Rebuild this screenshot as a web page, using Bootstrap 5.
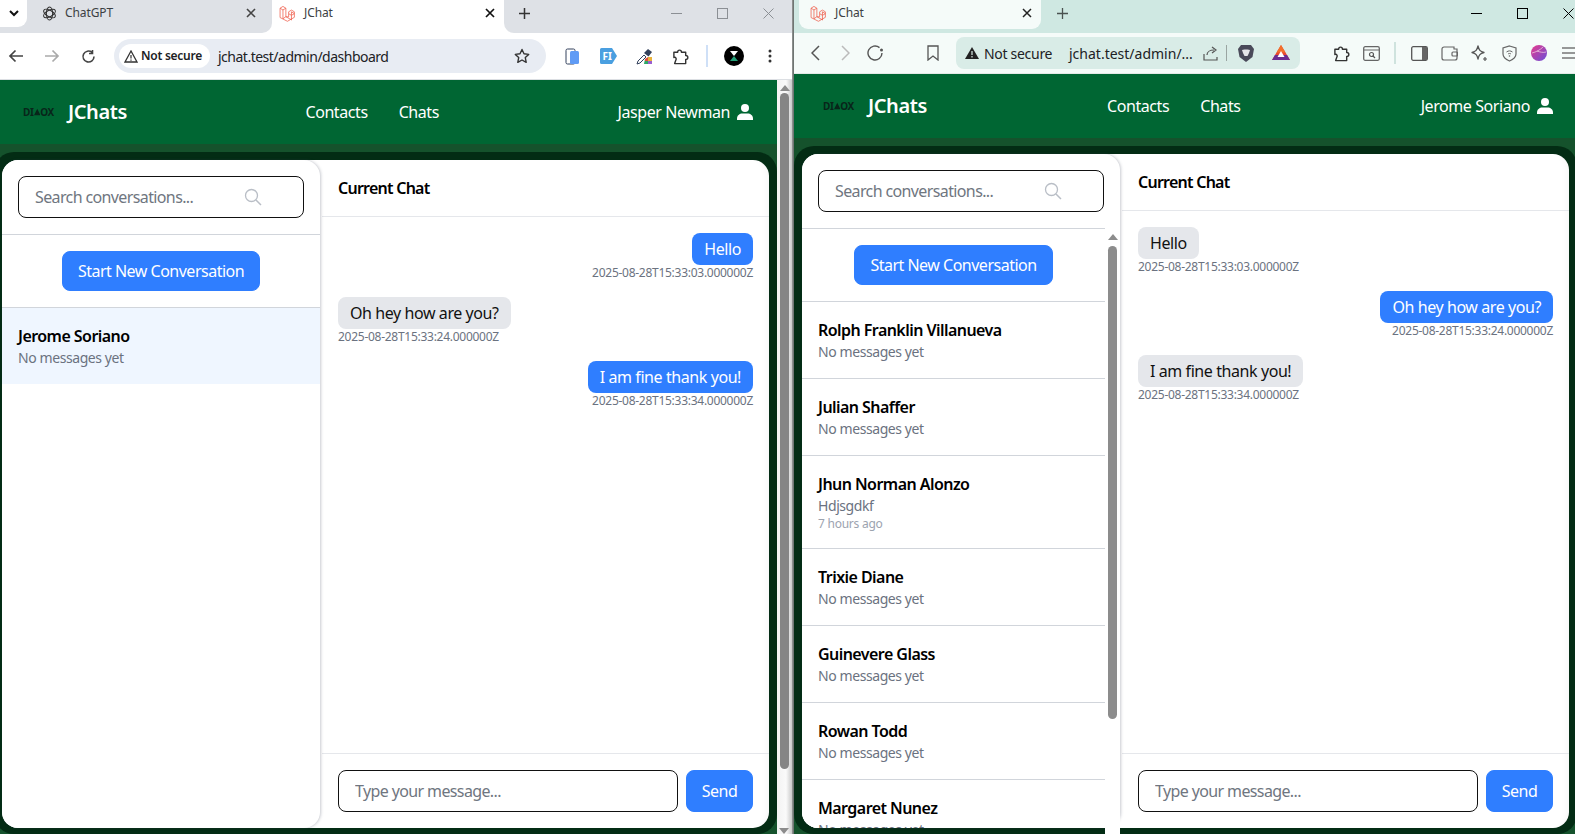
<!DOCTYPE html>
<html lang="en">
<head>
    <meta charset="UTF-8">
    <meta name="viewport" content="width=device-width, initial-scale=1.0">
    <title>JChat</title>
    <link href="https://cdn.jsdelivr.net/npm/bootstrap@5.3.3/dist/css/bootstrap.min.css" rel="stylesheet">
    <style>
        html, body {
            height: 100%;
            margin: 0;
            overflow: hidden;
            background: #1c2a24;
        }

        body, .form-control, .btn {
            font-family: "Noto Sans", "Open Sans", sans-serif;
            letter-spacing: -.42px;
        }

        .desk { height: 834px; width: 1575px; overflow: hidden; }
        .win { height: 834px; flex: none; overflow: hidden; }
        .win-a { width: 792px; }
        .win-b { width: 784px; border-left: 1px solid #6f7573; }
        .win-gap { width: 1px; background: #8b8f8d; flex: none; }

        /* browser chrome */
        .strip { height: 33px; flex: none; font-size: 12px; color: #3c4043; letter-spacing: -.1px; }
        .strip-a { background: #fff; }
        .strip-a .left-part { width: 272px; background: #dee1e6; border-bottom-right-radius: 10px; }
        .strip-a .tab-on { width: 232px; padding: 0 9px 7px 7px; }
        .strip-a .right-part { background: #dee1e6; border-bottom-left-radius: 10px; padding-bottom: 7px; }
        .tab-menu { width: 27px; height: 27px; background: #fff; border-bottom-right-radius: 9px; }
        .tab-off { margin-left: 15px; width: 221px; padding: 0 7px 7px 0; }
        .strip-b { background: #cfe8e2; }
        .strip-b .tab-on { width: 242px; height: 29px; margin-left: 5px; background: #f5fbf9; border-radius: 0 0 9px 9px; padding: 0 9px 3px 11px; }
        .new-tab { width: 16px; text-align: center; }
        .win-ctrl { width: 46px; text-align: center; line-height: 0; }
        .bar { flex: none; letter-spacing: 0; }
        .bar-a { height: 47px; background: #fff; border-bottom: 1px solid #dcdfe3; padding-left: 0; margin-left: -2px; }
        .bar-b { height: 41px; background: #f5fbf9; border-bottom: 1px solid #e3e9e7; padding-left: 6px; }
        .tool-a { width: 36px; flex: none; text-align: center; line-height: 0; }
        .tool-b { width: 30px; flex: none; text-align: center; line-height: 0; }
        .omni-a { width: 432px; height: 34px; margin: 0 8px; padding-left: 5px; background: #e8ecf3; border-radius: 17px; font-size: 14px; color: #202124; flex: none; letter-spacing: -.5px; }
        .chip-a { width: 91px; height: 24px; margin-right: 8px; background: #fff; border-radius: 12px; font-size: 12px; font-weight: 600; padding-left: 5px; gap: 3px; letter-spacing: -.25px; flex: none; }
        .omni-b { width: 344px; height: 32px; margin: 0 26px 0 8px; padding-left: 9px; background: #d9ece7; border-radius: 8px; font-size: 14px; color: #202124; flex: none; }
        .omni-b .not-safe { width: 85px; letter-spacing: -.3px; }
        .bar-sep { width: 2px; height: 22px; background: #cfe0f7; flex: none; }
        .bar-b .bar-sep { background: #cfe3de; }
        .fi-mark { font-size: 10px; font-weight: 700; fill: #fff; }

        /* page */
        .page { flex: 1; min-height: 0; background: #15522c; position: relative; }
        .page-a { margin-left: -6px; }
        .top-nav { height: 64px; flex: none; background: #006633; padding: 0 24px 0 29px; }
        .brand-mark { width: 31px; color: #08251a; font-size: 10px; font-weight: 700; letter-spacing: -.3px; line-height: 1; }
        .brand-name { font-size: 20px; font-weight: 600; color: #fff; margin: 0 0 0 14px; padding: 0; }
        .top-nav .nav-link { color: #fff; font-size: 16px; padding: 0; }
        .top-nav .nav-gap { gap: 31px; }
        .who { color: #fff; font-size: 16px; gap: 7px; }
        .shell { flex: 1; min-height: 0; margin-top: 8px; padding: 8px 8px 6px; background: #032c14; border-radius: 20px; }
        .panel { height: 100%; background: #fff; border-radius: 16px; }
        .side { width: 318px; flex: none; margin-right: 2px; background: #fff; border-radius: 16px; box-shadow: 1px 0 3px rgba(60, 70, 90, .28); position: relative; }
        .side-top { padding: 16px; border-bottom: 1px solid #d1d5db; flex: none; }
        .line-input { height: 42px; border: 1.5px solid #111; border-radius: 8px; font-size: 16px; padding: 0 16px; color: #222; box-shadow: none; letter-spacing: -.62px; }
        .line-input::placeholder { color: #6f7680; }
        .search-icon { position: absolute; right: 58px; top: 28px; }
        .side-list { flex: 1; min-height: 0; overflow: hidden; border-bottom-left-radius: 16px; }
        .side-list.has-bar { margin-right: 15px; }
        .new-wrap { padding: 16px; border-bottom: 1px solid #d1d5db; text-align: center; }
        .blue-btn { background: #2f7eff; border-color: #2f7eff; border-radius: 8px; height: 40px; font-size: 16px; color: #fff; padding: 0 15px; letter-spacing: -.5px; line-height: 37px; }
        .send-btn { height: 42px; width: 67px; padding: 0; flex: none; }
        .conv { padding: 16px; border-color: #d1d5db; }
        .conv.picked { background: #eff6ff; }
        .conv-name { font-size: 16px; line-height: 24px; font-weight: 600; color: #000; letter-spacing: -.55px; }
        .conv-last { font-size: 14px; line-height: 20px; color: #6b7280; letter-spacing: -.42px; }
        .conv-time { font-size: 12px; line-height: 16px; color: #9ca3af; letter-spacing: -.25px; }
        .chat { flex: 1; min-width: 0; border-radius: 0 16px 16px 0; box-shadow: inset -10px 0 10px -10px rgba(0, 0, 0, .06); }
        .chat-head { height: 57px; flex: none; padding: 0 16px; border-bottom: 1px solid #e5e7eb; font-size: 16px; font-weight: 600; color: #000; letter-spacing: -.75px; }
        .chat-body { flex: 1; min-height: 0; padding: 16px; gap: 16px; }
        .bubble { padding: 4px 12px; border-radius: 8px; font-size: 16px; line-height: 24px; }
        .bubble-me { background: #2f7eff; color: #fff; }
        .bubble-them { background: #e5e7eb; color: #111; }
        .stamp { font-size: 12px; line-height: 16px; color: #6b7280; letter-spacing: -.27px; }
        .chat-foot { flex: none; padding: 16px; border-top: 1px solid #e5e7eb; gap: 8px; height: 75px; }

        /* scrollbars */
        .page-bar { width: 15px; flex: none; background: linear-gradient(to right, #f3f3f3, #fafafa 60%, #c9c9c9); }
        .page-thumb { width: 9px; height: 676px; margin: 2px 0 0 3px; background: #858585; border-radius: 5px; }
        .list-bar { position: absolute; top: 74px; right: 0; bottom: -6px; width: 15px; background: #fff; }
        .list-bar .arrow-up { margin-top: 6px; }
        .list-thumb { width: 9px; height: 473px; margin: 6px 0 0 3px; background: #8c8c8c; border-radius: 5px; }
        .arrow-up { width: 0; height: 0; margin: 5px auto 0; border: solid transparent; border-width: 0 5px 6px; border-bottom-color: #8c8c8c; }
        .arrow-down { position: absolute; bottom: 0; left: 2px; width: 0; height: 0; border: solid transparent; border-width: 6px 5px 0; border-top-color: #8c8c8c; }
    </style>
</head>
<body>
    <svg width="0" height="0" class="position-absolute">
        <defs>
            <symbol id="laravel" viewBox="0 0 24 24">
                <path d="M1.5 4.5 5.6 2l4.1 2.5v12l8.3 4.7M1.5 4.5v13.2L11.9 23l9.8-5.6v-5.2M5.6 7l4.1-2.5M1.5 4.5 5.6 7v12.4M9.7 16.5 5.6 19.4M13.6 9.6l4-2.4 4.1 2.4v2.6l-4.1 2.4-4-2.4zM13.6 12.2v4.6l-3.9-.3M17.6 14.6v6.6M21.7 12.2l-4.1-2.6v5" fill="none" stroke="#f0604f" stroke-width="1.1" stroke-linejoin="round"/>
            </symbol>
            <symbol id="user" viewBox="0 0 16 16">
                <circle cx="8" cy="4" r="4" fill="#fff"/>
                <path d="M0 16v-1.5C0 11.5 2.5 9.5 5.5 9.5h5c3 0 5.500 2 5.500 5V16z" fill="#fff"/>
            </symbol>
            <symbol id="lens" viewBox="0 0 18 18">
                <circle cx="7.500" cy="7.500" r="6" fill="none" stroke="#b9bec6" stroke-width="1.300"/>
                <path d="m12 12 5 5" stroke="#b9bec6" stroke-width="1.500"/>
            </symbol>
            <symbol id="puzzle" viewBox="0 0 18 18">
                <path d="M2 4.500h4c0-3 4-3 4 0h4.500V8c3 0 3 4 0 4v4.500H2.800L4 13c1.500-2-1-4-2-3z" fill="none" stroke="#333" stroke-width="1.500" stroke-linejoin="round"/>
            </symbol>
        </defs>
    </svg>

    <div class="desk d-flex">
        <!-- Left window: Chrome -->
        <div class="win win-a d-flex flex-column">
            <div class="strip strip-a d-flex">
                <div class="left-part d-flex align-items-start">
                    <div class="tab-menu d-flex align-items-center justify-content-center">
                        <svg width="10" height="7" viewBox="0 0 10 7"><path d="m1 1 4 4 4-4" fill="none" stroke="#111" stroke-width="2"/></svg>
                    </div>
                    <div class="tab-off d-flex align-items-center h-100">
                        <svg width="15" height="15" viewBox="0 0 24 24" class="me-2 flex-none">
                            <g fill="none" stroke="#333" stroke-width="1.700">
                                <ellipse cx="12" cy="12" rx="5" ry="10.500"/>
                                <ellipse cx="12" cy="12" rx="5" ry="10.500" transform="rotate(60 12 12)"/>
                                <ellipse cx="12" cy="12" rx="5" ry="10.500" transform="rotate(120 12 12)"/>
                            </g>
                        </svg>
                        <span class="flex-grow-1">ChatGPT</span>
                        <svg width="10" height="10" viewBox="0 0 10 10"><path d="m1 1 8 8M9 1 1 9" stroke="#444" stroke-width="1.600"/></svg>
                    </div>
                </div>
                <div class="tab-on d-flex align-items-center">
                    <svg width="17" height="17" class="me-2 flex-none"><use href="#laravel"/></svg>
                    <span class="flex-grow-1">JChat</span>
                    <svg width="10" height="10" viewBox="0 0 10 10"><path d="m1 1 8 8M9 1 1 9" stroke="#111" stroke-width="1.700"/></svg>
                </div>
                <div class="right-part flex-grow-1 d-flex align-items-center">
                    <div class="new-tab" style="margin-left: 12px;">
                        <svg width="11" height="11" viewBox="0 0 11 11"><path d="M5.500 0v11M0 5.500h11" stroke="#333" stroke-width="1.500"/></svg>
                    </div>
                    <div class="ms-auto d-flex" style="margin-right: 1px;">
                        <div class="win-ctrl"><svg width="11" height="11" viewBox="0 0 11 11"><path d="M0 5.500h11" stroke="#8b8f94"/></svg></div>
                        <div class="win-ctrl"><svg width="11" height="11" viewBox="0 0 11 11"><rect x=".5" y=".5" width="10" height="10" fill="none" stroke="#8b8f94"/></svg></div>
                        <div class="win-ctrl"><svg width="11" height="11" viewBox="0 0 11 11"><path d="m.5.500 10 10M10.500.500l-10 10" stroke="#8b8f94"/></svg></div>
                    </div>
                </div>
            </div>
            <div class="bar bar-a d-flex align-items-center">
                <div class="tool-a"><svg width="16" height="14" viewBox="0 0 16 14"><path d="M15 7H2M7.500 1.500 2 7l5.500 5.500" fill="none" stroke="#444" stroke-width="1.700"/></svg></div>
                <div class="tool-a"><svg width="16" height="14" viewBox="0 0 16 14"><path d="M1 7h13M8.500 1.500 14 7l-5.500 5.500" fill="none" stroke="#aaa" stroke-width="1.700"/></svg></div>
                <div class="tool-a"><svg width="15" height="15" viewBox="0 0 15 15"><path d="M13 7.500A5.500 5.500 0 1 1 11 3.300M11.500 1v3.500H8" fill="none" stroke="#444" stroke-width="1.600"/></svg></div>
                <div class="omni-a d-flex align-items-center">
                    <div class="chip-a d-flex align-items-center">
                        <svg width="14" height="13" viewBox="0 0 14 13"><path d="M7 1 1 12h12z" fill="none" stroke="#333" stroke-width="1.300"/><path d="M7 5v3.500M7 9.500v1.200" stroke="#333" stroke-width="1.200"/></svg>
                        <span>Not secure</span>
                    </div>
                    <span>jchat.test/admin/dashboard</span>
                    <svg class="ms-auto" style="margin-right: 16px;" width="16" height="16" viewBox="0 0 16 16"><path d="m8 1.500 2 4.300 4.700.6-3.400 3.200.9 4.700L8 12l-4.200 2.300.9-4.700L1.300 6.400 6 5.800z" fill="none" stroke="#333" stroke-width="1.400" stroke-linejoin="round"/></svg>
                </div>
                <div class="tool-a">
                    <svg width="15" height="17" viewBox="0 0 15 17"><rect x="1" y="1" width="9" height="15" rx="1.500" fill="#fff" stroke="#33415c"/><rect x="5" y="3" width="9" height="13" rx="1.500" fill="#5f9bf5"/></svg>
                </div>
                <div class="tool-a">
                    <svg width="17" height="16" viewBox="0 0 17 16"><path d="M1.500 0H12l5 8-5 8H1.500A1.500 1.500 0 0 1 0 14.500v-13A1.500 1.500 0 0 1 1.500 0" fill="#4a9fe0"/><text x="2.500" y="11.500" class="fi-mark">FI</text></svg>
                </div>
                <div class="tool-a">
                    <svg width="17" height="17" viewBox="0 0 17 17"><path d="m1 16 1-3 6-6 2 2-6 6z" fill="#fff" stroke="#33415c"/><path d="m8 5 4-4 4 3-3.500 4.500z" fill="#33415c"/><path d="M9 11h3v5H8z" fill="#2fa866"/><path d="M12 9h4v4h-4z" fill="#e8b23a"/><path d="M12 13h4v3h-4z" fill="#9a5fd0"/><path d="m9 11 3-2v4H9z" fill="#e2503f"/></svg>
                </div>
                <div class="tool-a"><svg width="17" height="17"><use href="#puzzle"/></svg></div>
                <div class="bar-sep" style="margin: 0 8px;"></div>
                <div class="tool-a">
                    <svg width="20" height="20" viewBox="0 0 20 20"><circle cx="10" cy="10" r="10" fill="#000"/><path d="M6 5h8l-4 5z" fill="#fff"/><path d="m10 10 4 5H6z" fill="#22a078"/></svg>
                </div>
                <div class="tool-a">
                    <svg width="4" height="14" viewBox="0 0 4 14"><circle cx="2" cy="2" r="1.500" fill="#333"/><circle cx="2" cy="7" r="1.500" fill="#333"/><circle cx="2" cy="12" r="1.500" fill="#333"/></svg>
                </div>
            </div>
            <div class="page page-a d-flex" id="pageA"></div>
        </div>

        <div class="win-gap"></div>

        <!-- Right window: Brave -->
        <div class="win win-b d-flex flex-column">
            <div class="strip strip-b d-flex align-items-start">
                <div class="tab-on d-flex align-items-center">
                    <svg width="17" height="17" class="me-2 flex-none"><use href="#laravel"/></svg>
                    <span class="flex-grow-1">JChat</span>
                    <svg width="10" height="10" viewBox="0 0 10 10"><path d="m1 1 8 8M9 1 1 9" stroke="#222" stroke-width="1.500"/></svg>
                </div>
                <div class="new-tab h-100 d-flex align-items-center" style="margin-left: 16px; padding-bottom: 7px;">
                    <svg width="11" height="11" viewBox="0 0 11 11"><path d="M5.500 0v11M0 5.500h11" stroke="#4a5250" stroke-width="1.300"/></svg>
                </div>
                <div class="ms-auto d-flex h-100 align-items-center" style="margin-right: -14px; padding-bottom: 7px;">
                    <div class="win-ctrl"><svg width="11" height="11" viewBox="0 0 11 11"><path d="M0 5.500h11" stroke="#000"/></svg></div>
                    <div class="win-ctrl"><svg width="11" height="11" viewBox="0 0 11 11"><rect x=".5" y=".5" width="10" height="10" fill="none" stroke="#000"/></svg></div>
                    <div class="win-ctrl"><svg width="11" height="11" viewBox="0 0 11 11"><path d="m.5.500 10 10M10.500.500l-10 10" stroke="#000"/></svg></div>
                </div>
            </div>
            <div class="bar bar-b d-flex align-items-center">
                <div class="tool-b"><svg width="9" height="16" viewBox="0 0 9 16"><path d="M8 1 1 8l7 7" fill="none" stroke="#555" stroke-width="1.500"/></svg></div>
                <div class="tool-b"><svg width="9" height="16" viewBox="0 0 9 16"><path d="m1 1 7 7-7 7" fill="none" stroke="#bbb" stroke-width="1.500"/></svg></div>
                <div class="tool-b"><svg width="17" height="16" viewBox="0 0 17 16"><path d="M15 8a7 7 0 1 1-2.500-5.400" fill="none" stroke="#555" stroke-width="1.400"/><circle cx="14.500" cy="5" r="1.500" fill="#555"/></svg></div>
                <div class="tool-b" style="margin-left: 28px;"><svg width="12" height="16" viewBox="0 0 12 16"><path d="M1 1h10v14l-5-4-5 4z" fill="none" stroke="#555" stroke-width="1.300"/></svg></div>
                <div class="omni-b d-flex align-items-center">
                    <svg width="14" height="12" viewBox="0 0 14 12" class="flex-none" style="margin-right: 5px;"><path d="M7 0 0 12h14z" fill="#222"/><path d="M7 4v4M7 9v1.500" stroke="#d9ece7" stroke-width="1.200"/></svg>
                    <span class="not-safe">Not secure</span>
                    <span>jchat.test/admin/...</span>
                    <div class="ms-auto d-flex align-items-center">
                        <svg width="16" height="15" viewBox="0 0 16 15" style="margin-right: 7px;"><path d="M1 8v6h13v-3M4 9c0-3 3-5 7-5M9 1l4 3-4 3" fill="none" stroke="#555" stroke-width="1.200"/></svg>
                        <span style="width: 1px; height: 16px; background: #9aa5a2;"></span>
                        <svg width="16" height="18" viewBox="0 0 16 18" style="margin: 0 18px 0 11px;"><path d="M3 1h10l3 4-1.500 8L8 18l-6.500-5L0 5z" fill="#4a4a5a"/><path d="M4 6l2.500-.5h3L12 6l-1 3-1.500 3h-3L5 9z" fill="#e6e6ea"/></svg>
                        <svg width="18" height="16" viewBox="0 0 18 16" style="margin-right: 10px;"><path d="M9 0 0 15h18z" fill="#e8482f"/><path d="M9 0l4.500 7.500h-9z" fill="#f36f2b"/><path d="M0 15l3-5h12l3 5z" fill="#6a2c91"/><path d="m9 6 3.500 6h-7z" fill="#fff"/></svg>
                    </div>
                </div>
                <div class="tool-b"><svg width="17" height="17"><use href="#puzzle"/></svg></div>
                <div class="tool-b"><svg width="17" height="15" viewBox="0 0 17 15"><rect x=".7" y=".7" width="15.600" height="13.600" rx="1.500" fill="none" stroke="#666" stroke-width="1.300"/><path d="M1 4h15" stroke="#666"/><circle cx="8.500" cy="8.500" r="2" fill="none" stroke="#555" stroke-width="1.200"/><path d="m10 10 2 2" stroke="#555" stroke-width="1.200"/></svg></div>
                <div class="bar-sep" style="margin: 0 8px;"></div>
                <div class="tool-b"><svg width="17" height="15" viewBox="0 0 17 15"><rect x=".7" y=".7" width="15.600" height="13.600" rx="1.500" fill="none" stroke="#555" stroke-width="1.300"/><rect x="11" y="1" width="5" height="13" fill="#666"/></svg></div>
                <div class="tool-b"><svg width="17" height="15" viewBox="0 0 17 15"><path d="M13 3V1H3a2 2 0 0 0-2 2v9a2 2 0 0 0 2 2h11a2 2 0 0 0 2-2V3z" fill="none" stroke="#666" stroke-width="1.200"/><rect x="11" y="6" width="5.500" height="4" rx="1" fill="none" stroke="#666" stroke-width="1.200"/></svg></div>
                <div class="tool-b"><svg width="17" height="17" viewBox="0 0 17 17"><path d="M7 1c1 4 2 5.500 6 6.500-4 1-5 2.500-6 6.500-1-4-2-5.500-6-6.500 4-1 5-2.500 6-6.500z" fill="none" stroke="#555" stroke-width="1.300" stroke-linejoin="round"/><path d="M14 12v4M12 14h4" stroke="#555" stroke-width="1.200"/></svg></div>
                <div class="tool-b"><svg width="15" height="17" viewBox="0 0 15 17"><path d="M7.500 1 14 3v6c0 3-3 5.500-6.500 7C4 14.500 1 12 1 9V3z" fill="none" stroke="#666" stroke-width="1.200"/><path d="M4.500 7c2-1.500 4-1.500 6 0M6 9c1-.7 2-.7 3 0" fill="none" stroke="#666"/><circle cx="7.500" cy="11" r=".8" fill="#666"/></svg></div>
                <div class="tool-b"><svg width="16" height="16" viewBox="0 0 16 16"><defs><linearGradient id="orb" x1="0" y1="0" x2="1" y2="1"><stop offset="0" stop-color="#e83a8c"/><stop offset="1" stop-color="#6a4fd8"/></linearGradient></defs><circle cx="8" cy="8" r="8" fill="url(#orb)"/><path d="M1 8c4-1 8-3 11-6M6 6c3 1 6 2 9 1" fill="none" stroke="#f5d5e5" stroke-width=".7"/></svg></div>
                <div class="tool-b"><svg width="14" height="14" viewBox="0 0 14 14"><path d="M0 2h14M0 7h14M0 12h14" stroke="#777" stroke-width="1.500"/></svg></div>
            </div>
            <div class="page d-flex" id="pageB"></div>
        </div>
    </div>

    <script src="https://cdn.jsdelivr.net/npm/bootstrap@5.3.3/dist/js/bootstrap.bundle.min.js"></script>
    <script>
        // What each logged-in user sees
        const windows = [
            {
                el: 'pageA',
                user: 'Jasper Newman',
                pageBar: true,
                listBar: false,
                contacts: [{ name: 'Jerome Soriano', last: 'No messages yet', picked: true }],
                messages: [
                    { text: 'Hello', time: '2025-08-28T15:33:03.000000Z', me: true },
                    { text: 'Oh hey how are you?', time: '2025-08-28T15:33:24.000000Z', me: false },
                    { text: 'I am fine thank you!', time: '2025-08-28T15:33:34.000000Z', me: true }
                ]
            },
            {
                el: 'pageB',
                user: 'Jerome Soriano',
                pageBar: false,
                listBar: true,
                contacts: [
                    { name: 'Rolph Franklin Villanueva', last: 'No messages yet' },
                    { name: 'Julian Shaffer', last: 'No messages yet' },
                    { name: 'Jhun Norman Alonzo', last: 'Hdjsgdkf', time: '7 hours ago' },
                    { name: 'Trixie Diane', last: 'No messages yet' },
                    { name: 'Guinevere Glass', last: 'No messages yet' },
                    { name: 'Rowan Todd', last: 'No messages yet' },
                    { name: 'Margaret Nunez', last: 'No messages yet' }
                ],
                messages: [
                    { text: 'Hello', time: '2025-08-28T15:33:03.000000Z', me: false },
                    { text: 'Oh hey how are you?', time: '2025-08-28T15:33:24.000000Z', me: true },
                    { text: 'I am fine thank you!', time: '2025-08-28T15:33:34.000000Z', me: false }
                ]
            }
        ];

        function contactRow(c) {
            return `
                <div class="list-group-item conv ${c.picked ? 'picked' : ''}">
                    <div class="conv-name">${c.name}</div>
                    <div class="conv-last">${c.last}</div>
                    ${c.time ? `<div class="conv-time">${c.time}</div>` : ''}
                </div>`;
        }

        function messageRow(m) {
            return `
                <div class="d-flex flex-column ${m.me ? 'align-items-end' : 'align-items-start'}">
                    <div class="bubble ${m.me ? 'bubble-me' : 'bubble-them'}">${m.text}</div>
                    <div class="stamp">${m.time}</div>
                </div>`;
        }

        function renderWindow(w) {
            document.getElementById(w.el).innerHTML = `
                <div class="flex-grow-1 d-flex flex-column" style="min-width: 0;">
                    <nav class="top-nav navbar d-flex justify-content-between align-items-center">
                        <div class="d-flex align-items-center">
                            <div class="brand-mark d-flex align-items-center justify-content-center flex-none">DI<svg width="8" height="8" viewBox="0 0 8 8" class="flex-none"><path d="M4 0 8 8H0z" fill="#08251a"/></svg>OX</div>
                            <a class="navbar-brand brand-name" href="#">JChats</a>
                        </div>
                        <div class="d-flex nav-gap">
                            <a class="nav-link" href="#">Contacts</a>
                            <a class="nav-link" href="#">Chats</a>
                        </div>
                        <div class="who d-flex align-items-center">
                            <span>${w.user}</span>
                            <svg width="16" height="16"><use href="#user"/></svg>
                        </div>
                    </nav>
                    <div class="shell">
                        <div class="panel d-flex">
                            <div class="side d-flex flex-column">
                                <div class="side-top position-relative">
                                    <input class="form-control line-input" placeholder="Search conversations...">
                                    <svg class="search-icon" width="18" height="18"><use href="#lens"/></svg>
                                </div>
                                <div class="side-list ${w.listBar ? 'has-bar' : ''}">
                                    <div class="new-wrap"><button class="btn blue-btn">Start New Conversation</button></div>
                                    <div class="list-group list-group-flush">${w.contacts.map(contactRow).join('')}</div>
                                </div>
                                ${w.listBar ? '<div class="list-bar"><div class="arrow-up"></div><div class="list-thumb"></div></div>' : ''}
                            </div>
                            <div class="chat d-flex flex-column">
                                <div class="chat-head d-flex align-items-center">Current Chat</div>
                                <div class="chat-body d-flex flex-column">${w.messages.map(messageRow).join('')}</div>
                                <div class="chat-foot d-flex">
                                    <input class="form-control line-input" placeholder="Type your message...">
                                    <button class="btn blue-btn send-btn">Send</button>
                                </div>
                            </div>
                        </div>
                    </div>
                </div>
                ${w.pageBar ? '<div class="page-bar position-relative"><div class="arrow-up"></div><div class="page-thumb"></div><div class="arrow-down"></div></div>' : ''}`;
        }

        windows.forEach(renderWindow);
    </script>
</body>
</html>
